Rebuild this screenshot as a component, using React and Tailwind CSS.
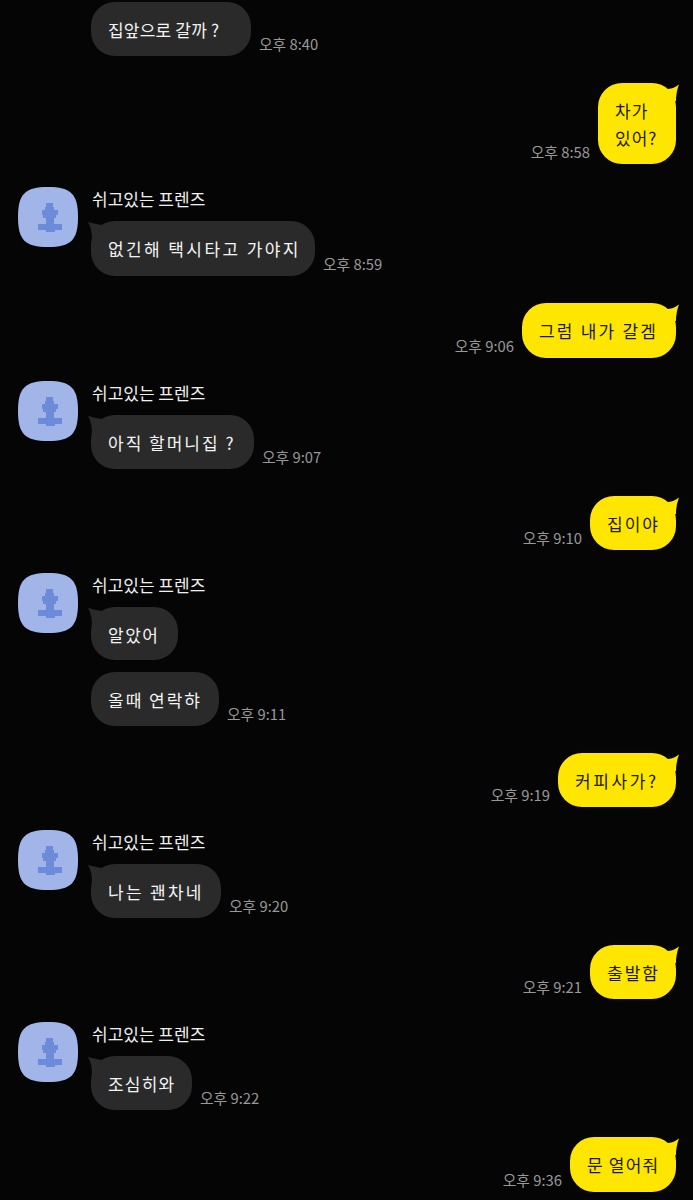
const font = { fontFamily: '"Noto Sans CJK KR", "Noto Sans", sans-serif' };

function Time({ children }) {
  return <span className="mb-[2px] shrink-0 text-[14.8px] leading-[20px] text-[#999999]">{children}</span>;
}

function Avatar() {
  return (
    <svg width="60" height="60" viewBox="0 0 60 60" className="shrink-0">
      <path d="M30 0C53 0 60 7 60 30C60 53 53 60 30 60C7 60 0 53 0 30C0 7 7 0 30 0Z" fill="#a1b5e9" />
      <g fill="#6c8cd9">
        <rect x="28" y="16" width="7" height="4" />
        <rect x="27" y="20" width="9" height="3" />
        <rect x="24" y="23" width="16" height="5" />
        <rect x="25" y="28" width="13" height="3" />
        <rect x="28" y="31" width="8" height="6" />
        <rect x="20" y="37" width="24" height="6" />
        <rect x="28" y="43" width="9" height="2" />
      </g>
    </svg>
  );
}

function Received({ text, time, box, tail }) {
  return (
    <div className="flex items-end gap-[8px]">
      <div className={`relative rounded-[24px] bg-[#2a2a2a] py-[13.5px] pl-[17px] text-[17px] leading-[27px] text-[#f4f4f4] ${box}`}>
        {tail && (
          <svg width="18" height="18" viewBox="0 0 18 18" className="absolute -left-[3px] top-0">
            <path d="M0 1Q7 3 14 4L14 18L4 18Q4 8 0 1Z" fill="#2a2a2a" />
          </svg>
        )}
        <span className="relative">{text}</span>
      </div>
      {time && <Time>{time}</Time>}
    </div>
  );
}

function Group({ messages }) {
  return (
    <div className="mt-[23px] flex gap-[13px] pl-[18px]">
      <Avatar />
      <div className="flex flex-col">
        <div className="mb-[10px] ml-[1px] h-[24px] text-[17px] leading-[24px] text-[#f0f0f0]">쉬고있는 프렌즈</div>
        <div className="flex flex-col gap-[12px]">
          {messages.map((m, i) => (
            <Received key={i} text={m.text} time={m.time} box={m.box} tail={i === 0} />
          ))}
        </div>
      </div>
    </div>
  );
}

function Sent({ lines, time, box }) {
  return (
    <div className="mt-[27px] flex items-end justify-end gap-[8px] pr-[17px]">
      <Time>{time}</Time>
      <div className={`relative rounded-[24px] bg-[#ffe600] py-[13.5px] pl-[17px] text-[17px] leading-[27px] text-[#1c1a00] ${box}`}>
        <svg width="18" height="18" viewBox="0 0 18 18" className="absolute -right-[3px] top-0">
          <path d="M6 6Q12 6 18 1.5Q15 9 15 18L6 18Z" fill="#ffe600" />
        </svg>
        {lines.map((l) => (
          <div key={l} className="relative">{l}</div>
        ))}
      </div>
    </div>
  );
}

export default function App() {
  return (
    <div className="h-[1200px] overflow-hidden bg-[#050505] pt-[2px]" style={font}>
      <div className="pl-[91px]">
        <Received text="집앞으로 갈까 ?" time="오후 8:40" box="w-[160px] tracking-[0.2px]" />
      </div>
      <Sent lines={['차가', '있어?']} time="오후 8:58" box="w-[78px] tracking-[1px]" />
      <Group messages={[{ text: '없긴해 택시타고 가야지', time: '오후 8:59', box: 'h-[55px] w-[224px] tracking-[2.4px]' }]} />
      <Sent lines={['그럼 내가 갈겜']} time="오후 9:06" box="h-[55px] w-[154px] tracking-[2.2px]" />
      <Group messages={[{ text: '아직 할머니집 ?', time: '오후 9:07', box: 'w-[163px] tracking-[2px]' }]} />
      <Sent lines={['집이야']} time="오후 9:10" box="w-[86px] tracking-[2px]" />
      <Group
        messages={[
          { text: '알았어', box: 'h-[53px] w-[87px] tracking-[1.5px]' },
          { text: '올때 연락햐', time: '오후 9:11', box: 'w-[128px] tracking-[2px]' },
        ]}
      />
      <Sent lines={['커피사가?']} time="오후 9:19" box="w-[118px] tracking-[2.6px]" />
      <Group messages={[{ text: '나는 괜차네', time: '오후 9:20', box: 'w-[130px] tracking-[2.3px]' }]} />
      <Sent lines={['출발함']} time="오후 9:21" box="w-[86px] tracking-[2px]" />
      <Group messages={[{ text: '조심히와', time: '오후 9:22', box: 'w-[101px] tracking-[1.2px]' }]} />
      <Sent lines={['문 열어줘']} time="오후 9:36" box="h-[55px] w-[106px] tracking-[1.2px]" />
    </div>
  );
}
